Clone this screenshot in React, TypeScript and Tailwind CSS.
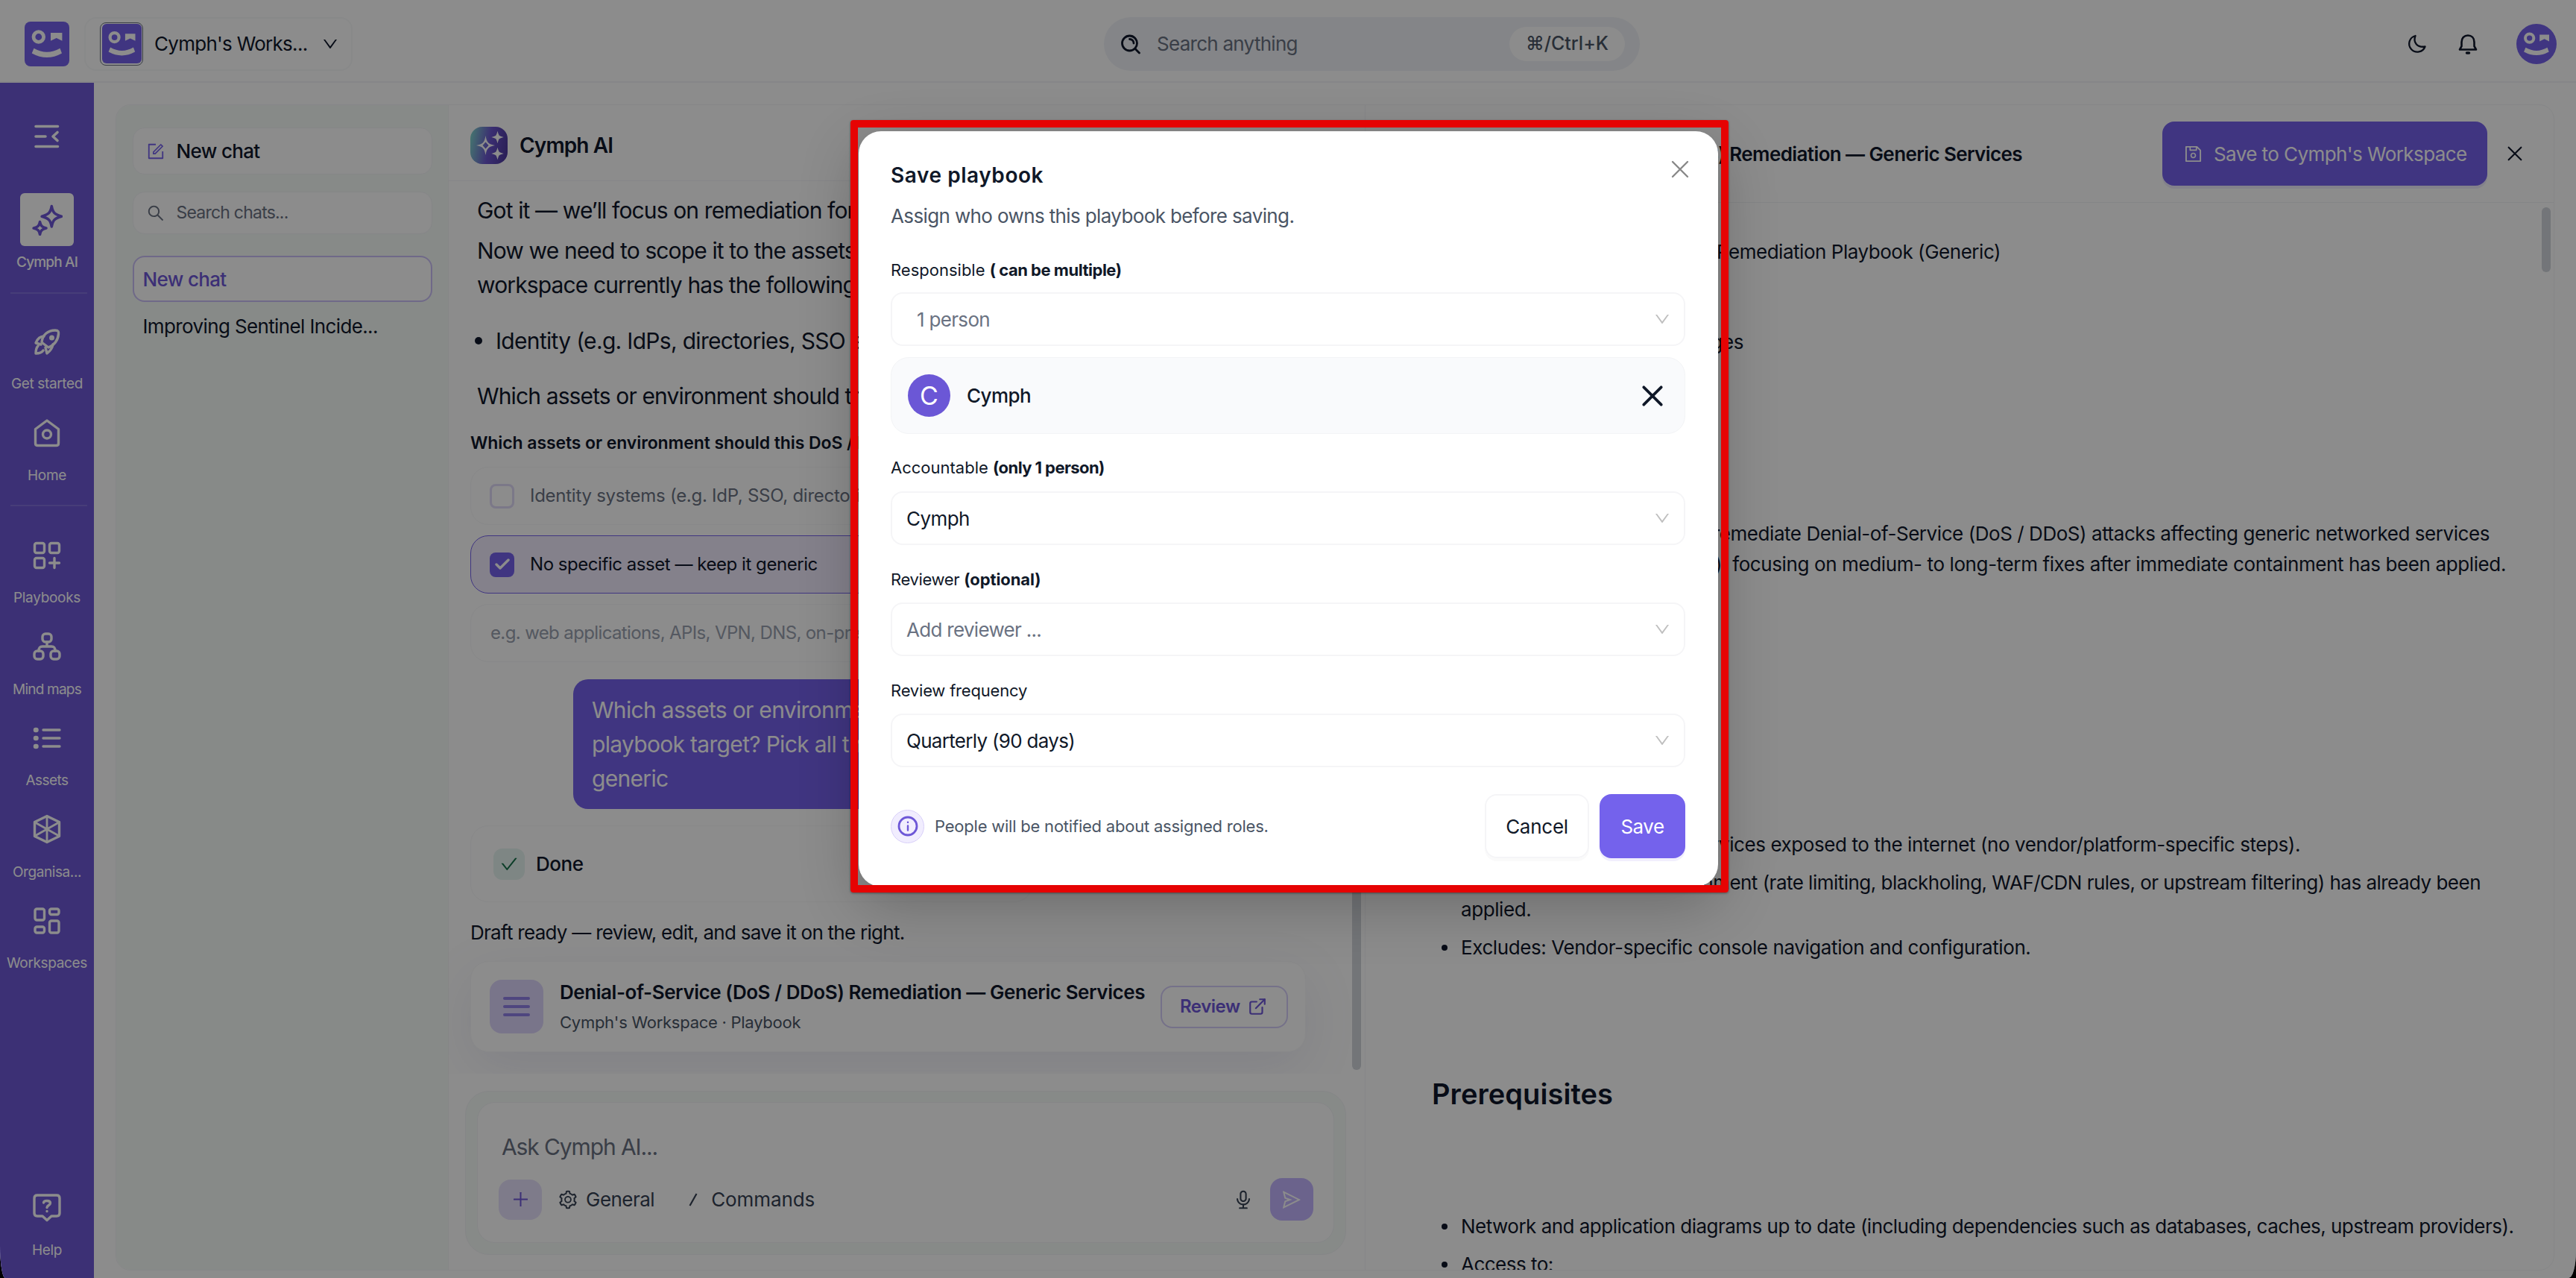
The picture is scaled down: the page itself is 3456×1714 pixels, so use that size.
import type { ReactNode } from 'react'
import {
  AiOutlineAudio,
  AiOutlineCheck,
  AiOutlineDown,
  AiOutlineForm,
  AiOutlinePlus,
  AiOutlineSave,
  AiOutlineSearch,
  AiOutlineSend,
  AiOutlineSetting,
} from 'react-icons/ai'
import { Check, ExternalLink } from 'lucide-react'

function Icon({ children, className = 'size-10' }: { children: ReactNode; className?: string }) {
  return (
    <svg
      viewBox="0 0 40 40"
      className={className}
      fill="none"
      stroke="currentColor"
      strokeWidth={3.4}
      strokeLinecap="round"
      strokeLinejoin="round"
    >
      {children}
    </svg>
  )
}

function Cross({ className, width }: { className: string; width: number }) {
  return (
    <svg viewBox="0 0 24 24" className={className} stroke="currentColor" strokeWidth={width} strokeLinecap="round">
      <path d="M2 2 22 22M22 2 2 22" />
    </svg>
  )
}

function Face({ className }: { className: string }) {
  return (
    <svg viewBox="0 0 60 60" className={className}>
      <circle cx="18.8" cy="20.5" r="6.8" fill="none" stroke="#fff" strokeWidth="4.8" />
      <path d="M35 15H50.4V25.7L42.7 22 35 25.7Z" fill="#fff" />
      <path d="M12.5 35.7Q30 45.7 47.5 35.7L50 42.5Q30 53.5 9.7 42.5Z" fill="#fff" />
    </svg>
  )
}

const ICONS = {
  ai: (
    <>
      <path d="M26 2.500C27.500 11 30 13 38.500 15.500 30 18 27.500 20 26 28.500 24.500 20 22 18 13.500 15.500 22 13 24.500 11 26 2.500Z" />
      <path d="M11 22.500C12 27.500 13.500 29 19 30.500 13.500 32 12 33.500 11 38.500 10 33.500 8.500 32 3 30.500 8.500 29 10 27.500 11 22.500Z" />
    </>
  ),
  rocket: (
    <>
      <path d="M13 21C14 11 21 5 31 5 35.500 5 35.800 7 35.500 10 34.500 20 29 25 22 28L14 22Z" />
      <path d="M16 13C10 13 7 17 5 22L12 24M28 24C27 30 24 33 20 36L18 28M8 26C5 29 5 33 5 36 9 36 13 35 15 32" />
      <circle cx="26.500" cy="15" r="1.800" fill="currentColor" />
    </>
  ),
  home: (
    <>
      <path d="M20 3 35.500 14.500V33.500Q35.500 36.500 32.500 36.500H7.500Q4.500 36.500 4.500 33.500V14.500Z" />
      <circle cx="20" cy="21.500" r="5.500" />
    </>
  ),
  playbooks: (
    <>
      <rect x="3.500" y="3.500" width="13" height="13" rx="2.500" />
      <rect x="23.500" y="3.500" width="13" height="13" rx="2.500" />
      <rect x="3.500" y="23.500" width="13" height="13" rx="2.500" />
      <path d="M30 23.500V36.500M23.500 30H36.500" />
    </>
  ),
  maps: (
    <>
      <rect x="14" y="3" width="12" height="11" rx="4" />
      <rect x="3" y="26" width="12" height="11" rx="4" />
      <rect x="25" y="26" width="12" height="11" rx="4" />
      <path d="M20 14V20M9 26C9 21.500 10.500 20 14 20H26C29.500 20 31 21.500 31 26" />
    </>
  ),
  assets: (
    <>
      <path d="M15 9H37M15 20H37M15 31H37" />
      <path d="M5 9H5.500M5 20H5.500M5 31H5.500" strokeWidth="6.500" />
    </>
  ),
  org: (
    <>
      <path d="M20 2.500 36.500 10.500V29.500L20 37.500 3.500 29.500V10.500Z" />
      <path d="M20 3V37M4 11 36 29M36 11 4 29" strokeWidth="2.800" />
    </>
  ),
  workspaces: (
    <>
      <rect x="4" y="4" width="12.500" height="15" rx="2.500" />
      <rect x="23.500" y="4" width="12.500" height="7.500" rx="2.500" />
      <rect x="4" y="28" width="12.500" height="8" rx="2.500" />
      <rect x="23.500" y="20" width="12.500" height="16" rx="2.500" />
    </>
  ),
  help: (
    <>
      <path d="M7 3H33Q37 3 37 7V27Q37 31 33 31H26L20 36.500 14 31H7Q3 31 3 27V7Q3 3 7 3Z" />
      <path d="M15.500 13C16 9.500 24.500 9.500 24.500 13.500 24.500 16.500 20 16.500 20 19.500M20 24.500V24.600" />
    </>
  ),
}

function NavItem({ icon, label, active, tracking }: { icon: keyof typeof ICONS; label: string; active?: boolean; tracking: string }) {
  return (
    <div className="flex h-[106px] w-full shrink-0 flex-col items-center gap-[9px] text-white">
      <div className={`flex size-[72px] items-center justify-center rounded-md ${active ? 'bg-white text-[#6d57d7]' : ''}`}>
        <Icon className={active ? 'size-[42px]' : 'size-10'}>{ICONS[icon]}</Icon>
      </div>
      <span className={`text-[19px] leading-[26px] ${active ? 'font-medium' : ''} ${tracking}`}>{label}</span>
    </div>
  )
}

function Sidebar() {
  return (
    <aside className="flex w-[126px] shrink-0 flex-col items-center bg-[#6d58d6] pt-14">
      <svg viewBox="0 0 34 32" className="h-8 w-[34px] shrink-0" fill="none" stroke="#fff" strokeWidth="3.6" strokeLinecap="round" strokeLinejoin="round">
        <path d="M2 2.500H31.500M2 16H15M2 29.500H31.500M31 10.500 25 16 31 21.500" />
      </svg>
      <div className="mt-[60px] w-full">
        <NavItem icon="ai" label="Cymph AI" active tracking="tracking-[-0.044em]" />
      </div>
      <div className="mt-[27px] ml-1 h-0.5 w-[103px] shrink-0 bg-white/15" />
      <div className="mt-7 flex w-full flex-col gap-[17px]">
        <NavItem icon="rocket" label="Get started" tracking="tracking-[-0.019em]" />
        <NavItem icon="home" label="Home" tracking="tracking-[-0.016em]" />
      </div>
      <div className="mt-[26px] ml-1 h-0.5 w-[103px] shrink-0 bg-white/15" />
      <div className="mt-[30px] flex w-full flex-col gap-[16.5px]">
        <NavItem icon="playbooks" label="Playbooks" tracking="tracking-[-0.016em]" />
        <NavItem icon="maps" label="Mind maps" tracking="tracking-[-0.041em]" />
        <NavItem icon="assets" label="Assets" tracking="tracking-[-0.029em]" />
        <NavItem icon="org" label="Organisa..." tracking="tracking-[-0.022em]" />
        <NavItem icon="workspaces" label="Workspaces" tracking="tracking-[-0.018em]" />
      </div>
      <div className="mt-auto mb-6 w-full">
        <NavItem icon="help" label="Help" tracking="tracking-[-0.019em]" />
      </div>
    </aside>
  )
}

function TopBar() {
  return (
    <header className="flex h-[111px] shrink-0 items-center border-b-2 border-[#f4f5f7] pt-2 pr-[26px] pl-[33px]">
      <div className="flex w-[1448px] shrink-0 items-center gap-5">
        <div className="size-[60px] rounded-lg bg-[#7561ec]">
          <Face className="size-[60px]" />
        </div>
        <div className="flex h-[72px] w-[360px] items-center rounded-2xl border-2 border-[#f8f9fa] pl-[19px]">
          <div className="flex size-[58px] items-center justify-center rounded-lg border border-gray-500">
            <div className="size-[53px] rounded-md bg-[#7561ec]">
              <Face className="size-[53px]" />
            </div>
          </div>
          <span className="ml-[15px] text-[26px] tracking-[-0.028em]">Cymph's Works...</span>
          <AiOutlineDown className="ml-[19px] size-6" />
        </div>
      </div>
      <div className="flex h-[72px] w-[719px] shrink-0 items-center rounded-full bg-[#f0f3f7] pr-5 pl-[22px]">
        <svg viewBox="0 0 28 28" className="size-7" fill="none" stroke="currentColor" strokeWidth="2.8" strokeLinecap="round">
          <circle cx="12.500" cy="13" r="10" />
          <path d="M20 20.500 25.500 26M12.500 7.500A5.500 5.500 0 0 1 18 13" />
        </svg>
        <span className="ml-[21px] text-[26px] tracking-[-0.028em] text-gray-500">Search anything</span>
        <div className="ml-auto flex h-[46px] w-[155px] items-center justify-center rounded-full bg-white text-[25px] font-medium text-gray-600">
          ⌘/Ctrl+K
        </div>
      </div>
      <div className="ml-auto flex items-center">
        <svg viewBox="0 0 28 28" className="size-7" fill="none" stroke="currentColor" strokeWidth="2.3" strokeLinejoin="round">
          <path d="M11.500 3C8 12 14 19 24.500 17.500A11 11 0 1 1 11.500 3Z" />
        </svg>
        <svg viewBox="0 0 28 28" className="ml-10 size-7" fill="none" stroke="currentColor" strokeWidth="2.600" strokeLinejoin="round" strokeLinecap="round">
          <path d="M3 21.500H25L22.500 17V11.500C22.500 6 19 2.500 14 2.500S5.500 6 5.500 11.500V17Z" />
          <path d="M12.500 26H15.500" strokeWidth="3.500" />
        </svg>
        <div className="ml-[51px] flex size-[54px] items-center justify-center rounded-full bg-[#7561ec]">
          <Face className="size-[50px]" />
        </div>
      </div>
    </header>
  )
}

function ChatList() {
  return (
    <div className="flex w-[446px] shrink-0 flex-col items-center border-r border-[#f2f4f4] bg-[#f6fbf8] pt-[30px]">
      <div className="flex h-[63px] w-[402px] items-center rounded-2xl border border-gray-100 bg-white pl-[17px]">
        <AiOutlineForm className="size-[26px] text-[#7561ec]" />
        <span className="ml-[15px] text-[26px] font-medium tracking-[-0.025em]">New chat</span>
      </div>
      <div className="mt-[23px] flex h-[57px] w-[402px] items-center rounded-2xl border border-gray-100 bg-white pl-[17px] text-gray-500">
        <AiOutlineSearch className="size-[26px]" />
        <span className="ml-[15px] text-[23px] tracking-[-0.034em]">Search chats...</span>
      </div>
      <div className="mt-[29px] flex h-[62px] w-[402px] items-center rounded-2xl border-2 border-[#cbc0f8] bg-white pl-3 text-[26px] font-medium tracking-[-0.025em] text-[#6d57d7]">
        New chat
      </div>
      <div className="mt-3 w-[402px] pl-3.5 text-[26px] leading-[42px] tracking-[-0.024em]">Improving Sentinel Incide...</div>
    </div>
  )
}

function Option({ label, checked }: { label: string; checked?: boolean }) {
  return (
    <div
      className={`flex h-[78px] items-center rounded-3xl border pl-[25px] text-2xl ${
        checked ? 'border-[#7561ec] bg-[#f0ecfd]' : 'border-[#f7f8f9] text-gray-500'
      }`}
    >
      {checked ? (
        <div className="flex size-[33px] items-center justify-center rounded-lg bg-[#7561ec]">
          <Check className="size-6 text-white" strokeWidth={3.4} />
        </div>
      ) : (
        <div className="size-[33px] rounded-lg border-[3px] border-[#e0daf8]" />
      )}
      <span className={`ml-[21px] ${checked ? 'tracking-[-0.019em]' : 'tracking-[-0.011em]'}`}>{label}</span>
    </div>
  )
}

function Chat() {
  return (
    <div className="flex w-[1230px] shrink-0 flex-col border-r border-[#f4f5f7]">
      <div className="flex h-[102px] shrink-0 items-center gap-4 border-b border-[#f4f5f7] pt-[7px] pl-[29px]">
        <div className="flex size-[50px] items-center justify-center rounded-2xl bg-linear-[100deg,#7fdccb_0%,#6b55cf_50%,#4a3699_100%]">
          <svg viewBox="0 0 50 50" className="size-[50px] fill-white">
            <path
              fillRule="evenodd"
              d="M20.500 12C22 21 24 23 33 25 24 27 22 29 20.500 38 19 29 17 27 8 25 17 23 19 21 20.500 12ZM20.500 20.500 16.500 25 20.500 29.500 24.500 25Z"
            />
            <path d="M36.500 8.500C37.500 12 38.500 13 42 14 38.500 15 37.500 16 36.500 19.500 35.500 16 34.500 15 31 14 34.500 13 35.500 12 36.500 8.500Z" stroke="#fff" strokeWidth="1.500" />
            <path d="M36.500 30.500C37.500 34 38.500 35 42 36 38.500 37 37.500 38 36.500 41.500 35.500 38 34.500 37 31 36 34.500 35 35.500 34 36.500 30.500Z" stroke="#fff" strokeWidth="1.500" />
          </svg>
        </div>
        <span className="text-[28px] font-semibold tracking-[-0.032em]">Cymph AI</span>
      </div>

      <div className="flex h-[1197px] shrink-0 flex-col overflow-hidden pt-4 pl-[29px]">
        <div className="flex flex-col pl-[9px] text-[30px] leading-[46px] tracking-[-0.029em]">
          <p>Got it — we’ll focus on remediation for DoS / DDoS.</p>
          <p className="mt-2">Now we need to scope it to the assets involved. Your</p>
          <p>workspace currently has the following asset types:</p>
          <div className="mt-[29px] flex items-center">
            <span className="-ml-[3px] size-2.5 rounded-full bg-current" />
            <span className="ml-[18px] tracking-[-0.023em]">Identity (e.g. IdPs, directories, SSO apps)</span>
          </div>
          <p className="mt-7">Which assets or environment should this playbook target?</p>
        </div>
        <p className="mt-[22px] text-[23px] leading-9 font-semibold tracking-[-0.004em]">
          Which assets or environment should this DoS / DDoS playbook target?
        </p>
        <div className="mt-3.5 flex w-[1154px] shrink-0 flex-col gap-3.5">
          <Option label="Identity systems (e.g. IdP, SSO, directories)" />
          <Option label="No specific asset — keep it generic" checked />
          <div className="flex h-[78px] items-center rounded-3xl border border-[#f7f8f9] pl-[26px] text-2xl tracking-[-0.026em] text-gray-400">
            e.g. web applications, APIs, VPN, DNS, on-prem servers
          </div>
        </div>
        <div className="mt-[23px] ml-[138px] h-[174px] w-[1016px] shrink-0 rounded-[20px] bg-[#7561ec] pt-[18px] pl-[25px] text-[30px] leading-[46px] tracking-[-0.023em] text-white">
          <p>Which assets or environment should this DoS / DDoS</p>
          <p>playbook target? Pick all that apply, or keep it</p>
          <p>generic</p>
        </div>
        <div className="mt-[22px] flex h-[103px] w-[754px] shrink-0 items-center rounded-3xl border border-[#f7f8f9] pl-[30px]">
          <div className="flex size-[42px] items-center justify-center rounded-xl bg-[#e5f4f0]">
            <AiOutlineCheck className="size-[26px] text-[#15704a]" />
          </div>
          <span className="ml-[15px] text-[26px] font-medium tracking-[-0.018em]">Done</span>
        </div>
        <p className="mt-[23px] text-[26px] leading-9 tracking-[-0.028em]">Draft ready — review, edit, and save it on the right.</p>
        <div className="mt-5 flex h-[122px] w-[1121px] shrink-0 items-center rounded-3xl border border-[#f7f8f9] bg-white pl-[25px] shadow-[0_20px_70px_rgba(90,90,160,0.12)]">
          <div className="flex size-[72px] flex-col items-center justify-center gap-[7px] rounded-2xl bg-[#ddd5fb]">
            <span className="h-1 w-9 rounded-sm bg-[#9180e8]" />
            <span className="h-1 w-9 rounded-sm bg-[#9180e8]" />
            <span className="h-1 w-9 rounded-sm bg-[#9180e8]" />
          </div>
          <div className="ml-[22px] w-[806px]">
            <p className="text-[26px] leading-9 font-semibold tracking-[-0.017em]">
              Denial-of-Service (DoS / DDoS) Remediation — Generic Services
            </p>
            <p className="mt-[5px] text-[22px] leading-[34px] tracking-[-0.012em] text-gray-600">Cymph's Workspace · Playbook</p>
          </div>
          <div className="flex h-[57px] w-[171px] items-center rounded-2xl border-2 border-[#d6cef9] pl-6 text-[#6d57d7]">
            <span className="text-2xl font-semibold tracking-[-0.02em]">Review</span>
            <ExternalLink className="ml-2.5 size-[26px]" strokeWidth={2} />
          </div>
        </div>
      </div>

      <div className="mt-[23px] ml-[22px] flex h-[220px] w-[1182px] shrink-0 items-start rounded-[32px] border border-gray-100 bg-[#f6fbf8] px-[15px] pt-3.5">
        <div className="h-[189px] w-full rounded-3xl border border-gray-100 bg-white pr-[27px] pl-7">
          <p className="pt-9 pl-1 text-[30px] leading-[46px] tracking-[-0.037em] text-gray-500">Ask Cymph AI...</p>
          <div className="mt-[19px] flex h-[57px] items-center text-gray-700">
            <div className="flex h-[54px] w-[58px] items-center justify-center rounded-2xl bg-[#e6e0fb] text-[#6d57d7]">
              <AiOutlinePlus className="size-[27px]" />
            </div>
            <AiOutlineSetting className="ml-[21px] size-[28px]" />
            <span className="ml-2.5 text-[26px] tracking-[-0.02em]">General</span>
            <svg viewBox="0 0 12 18" className="ml-[46px] h-[18px] w-3" fill="none" stroke="currentColor" strokeWidth="2.200">
              <path d="M1.500 17 10.500 1" />
            </svg>
            <span className="ml-[18px] text-[26px] tracking-[-0.003em]">Commands</span>
            <AiOutlineAudio className="ml-auto size-7" />
            <div className="ml-[22px] flex h-[57px] w-[58px] items-center justify-center rounded-2xl bg-[#c3b5ff] text-white">
              <AiOutlineSend className="size-7" />
            </div>
          </div>
        </div>
      </div>
    </div>
  )
}

function Bullet({ children }: { children: ReactNode }) {
  return (
    <div className="flex h-9 items-center">
      <span className="ml-[13px] size-2 rounded-full bg-current" />
      <div className="ml-[18px]">{children}</div>
    </div>
  )
}

function Preview() {
  return (
    <div className="flex grow flex-col overflow-hidden rounded-r-[20px]">
      <div className="flex h-[131px] shrink-0 items-center border-b border-[#f1f2f5] pr-[42px]">
        <div className="flex w-[881px] justify-end text-[26px] font-semibold tracking-[-0.023em]">
          Denial-of-Service (DoS / DDoS) Remediation — Generic Services
        </div>
        <div className="ml-auto flex h-[86px] w-[436px] items-center rounded-2xl bg-[#7561ec] pl-[28px] text-white shadow-[0_4px_0_rgba(117,97,236,0.12)]">
          <AiOutlineSave className="size-[27px]" />
          <span className="ml-3.5 text-[26px] tracking-[-0.022em]">Save to Cymph's Workspace</span>
        </div>
        <Cross className="ml-[27px] size-5" width={2.6} />
      </div>
      <div className="flex grow">
        <div className="flex w-[1560px] flex-col pt-12 pl-[89px] text-[26px] leading-9 tracking-[-0.018em]">
          <div className="flex w-[763px] justify-end">DoS / DDoS Remediation Playbook (Generic)</div>
          <div className="mt-[85px] flex w-[418px] justify-end">Playbook type: Changes</div>
          <div className="mt-[218px] leading-[41px]">
            <div className="flex w-[1419px] justify-end tracking-[-0.017em]">
              Define the medium-term steps to remediate Denial-of-Service (DoS / DDoS) attacks affecting generic networked services
            </div>
            <div className="flex w-[1441px] justify-end tracking-[-0.015em]">
              (web, API, DNS, VPN, and edge), focusing on medium- to long-term fixes after immediate containment has been applied.
            </div>
          </div>
          <div className="mt-[338px] flex flex-col gap-[15px] tracking-[-0.016em]">
            <Bullet>
              <div className="flex w-[1126px] justify-end">Applies to generic services exposed to the internet (no vendor/platform-specific steps).</div>
            </Bullet>
            <div>
              <Bullet>
                <div className="flex w-[1368px] justify-end tracking-[-0.02em]">
                  Assumes that containment (rate limiting, blackholing, WAF/CDN rules, or upstream filtering) has already been
                </div>
              </Bullet>
              <div className="pl-[39px]">applied.</div>
            </div>
            <Bullet>Excludes: Vendor-specific console navigation and configuration.</Bullet>
          </div>
          <h2 className="mt-[154px] text-[38px] leading-[48px] font-semibold tracking-[0.002em]">Prerequisites</h2>
          <div className="mt-[136px] flex flex-col gap-[15px] tracking-[-0.02em]">
            <Bullet>Network and application diagrams up to date (including dependencies such as databases, caches, upstream providers).</Bullet>
            <Bullet>Access to:</Bullet>
          </div>
        </div>
        <div className="mt-1.5 ml-[18px] h-[87px] w-3 rounded-full bg-gray-300" />
      </div>
    </div>
  )
}

function Select({ value, muted, className }: { value: string; muted?: boolean; className: string }) {
  return (
    <div className="flex h-[72px] items-center justify-between rounded-2xl border-2 border-[#f5f5f7] pr-[17px] pl-[19px]">
      <span className={`text-[26px] ${muted ? 'text-gray-500' : ''} ${className}`}>{value}</span>
      <AiOutlineDown className="size-6 text-[#bfbfbf]" />
    </div>
  )
}

function SaveModal() {
  return (
    <div className="absolute top-[176px] left-[1152px] flex h-[1013px] w-[1153px] flex-col rounded-[30px] bg-white pt-[33px] pr-11 pl-[43px] text-gray-900 shadow-[0_24px_80px_rgba(0,0,0,0.24)]">
      <div className="flex justify-between">
        <h1 className="text-[28px] leading-[52px] font-semibold tracking-[0.02em]">Save playbook</h1>
        <Cross className="mt-[6px] -mr-[5px] size-6 text-[#888]" width={2.4} />
      </div>
      <p className="mt-[11px] text-[26px] leading-9 tracking-[-0.024em] text-gray-600">Assign who owns this playbook before saving.</p>

      <p className="mt-[36px] text-[22px] leading-9">
        Responsible <b className="tracking-[-0.022em]">( can be multiple)</b>
      </p>
      <div className="mt-3 flex flex-col gap-[15px]">
        <Select value="1 person" muted className="pl-3.5 tracking-[-0.026em]" />
        <div className="flex h-[103px] items-center rounded-3xl border border-[#f3f4f6] bg-[#f9fafc] pr-[29px] pl-[22px]">
          <div className="flex size-[57px] items-center justify-center rounded-full bg-[#6b57d6] text-[34px] text-white">C</div>
          <span className="ml-[22px] text-[26px] font-medium tracking-[-0.022em]">Cymph</span>
          <Cross className="ml-auto size-[28px]" width={3.2} />
        </div>
      </div>

      <p className="mt-[27px] text-[22px] leading-9">
        Accountable <b className="tracking-[-0.026em]">(only 1 person)</b>
      </p>
      <div className="mt-3.5">
        <Select value="Cymph" className="tracking-[-0.022em]" />
      </div>

      <p className="mt-7 text-[22px] leading-9">
        <span className="tracking-[-0.017em]">Reviewer</span> <b className="tracking-[-0.005em]">(optional)</b>
      </p>
      <div className="mt-[13px]">
        <Select value="Add reviewer ..." muted className="tracking-[-0.027em]" />
      </div>

      <p className="mt-7 text-[22px] leading-9 tracking-[-0.009em]">Review frequency</p>
      <div className="mt-[13px]">
        <Select value="Quarterly (90 days)" className="tracking-[-0.027em]" />
      </div>

      <div className="mt-9 flex items-center">
        <div className="flex size-[45px] items-center justify-center rounded-full border border-[#d9d0fa] bg-[#f1edfe]">
          <svg viewBox="0 0 28 28" className="size-7" fill="none" stroke="#6d57d7" strokeWidth="2.800" strokeLinecap="round">
            <circle cx="14" cy="14" r="12" />
            <path d="M14 13.500V19.500M14 8.800V8.900" strokeWidth="2.400" />
          </svg>
        </div>
        <span className="ml-3.5 text-[22px] tracking-[-0.01em] text-gray-600">People will be notified about assigned roles.</span>
        <div className="ml-auto flex h-[86px] w-[140px] items-center justify-center rounded-2xl border-2 border-[#f5f5f7] text-[26px] tracking-[-0.01em] shadow-[0_4px_0_rgba(0,0,0,0.02)]">
          Cancel
        </div>
        <div className="ml-[14px] flex h-[86px] w-[115px] items-center justify-center rounded-2xl bg-[#7462ec] text-[26px] tracking-[-0.02em] text-white shadow-[0_4px_0_rgba(116,98,236,0.1)]">
          Save
        </div>
      </div>
    </div>
  )
}

export default function App() {
  return (
    <div className="h-[1714px] w-[3456px] overflow-hidden bg-black font-['Inter',sans-serif] whitespace-nowrap text-[#0f172a]">
      <div className="relative flex h-full flex-col overflow-hidden bg-white [border-bottom-left-radius:7px_44px] [border-bottom-right-radius:10px_36px]">
        <TopBar />
        <div className="flex grow">
          <Sidebar />
          <main className="mt-[29px] ml-[29px] flex h-[1564px] w-[3272px] overflow-hidden rounded-[20px] border border-[#f4f5f7]">
            <ChatList />
            <Chat />
            <Preview />
          </main>
        </div>

        <div className="absolute inset-0 bg-black/45" />
        {/* chat scrollbar, continues behind the dialog */}
        <div className="absolute top-[900px] left-[1814px] h-[535px] w-3 rounded-full bg-[#737578]" />
        <SaveModal />
        <div className="absolute top-[161px] left-[1141px] h-[1036px] w-[1178px] rounded border-x-[10px] border-t-[10.5px] border-b-[10px] border-[#e60303] shadow-[0_1px_3px_rgba(0,0,0,0.4)]" />
      </div>
    </div>
  )
}
